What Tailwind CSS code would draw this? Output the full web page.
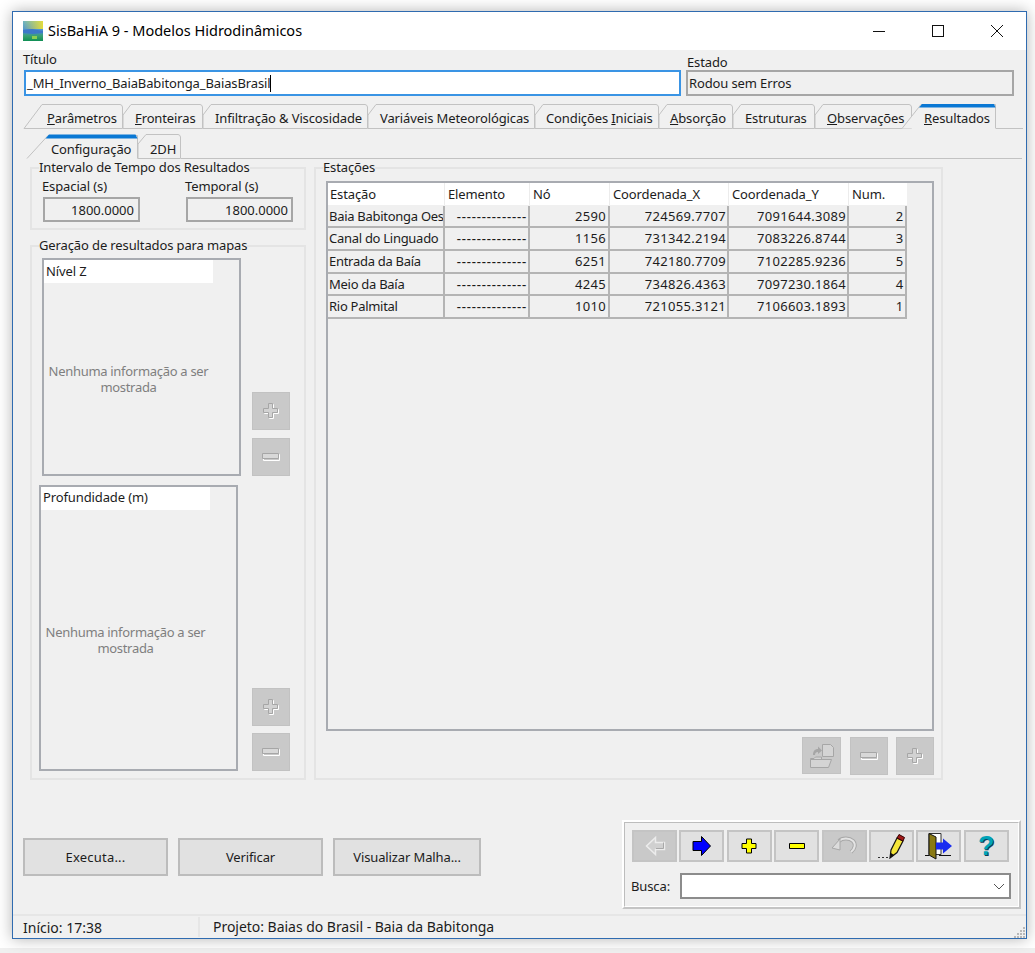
<!DOCTYPE html>
<html lang="pt-BR">
<head>
  <meta charset="UTF-8">
  <title>SisBaHiA 9 - Modelos Hidrodinâmicos</title>
  <script src="https://cdn.jsdelivr.net/npm/@tailwindcss/browser@4"></script>
</head>
<body class="bg-white h-[953px] overflow-hidden font-['Noto_Sans',sans-serif] text-[13px] leading-[16px] tracking-[-0.12px] text-[#1c1c1c]">

  <div class="relative z-10 ml-[12px] mt-[11px] w-[1015px] h-[928px] border border-[#2f6bb0] bg-[#f0f0f0] flex flex-col shadow-[0_0_14px_rgba(0,0,0,0.3)]">

    <!-- title bar -->
    <div class="h-[38px] bg-white flex items-center pl-[10px] shrink-0">
      <svg width="20" height="20" viewBox="0 0 20 20">
        <defs>
          <linearGradient id="logoBg" x1="0" y1="0" x2="0" y2="1">
            <stop offset="0" stop-color="#6fb6c0"/><stop offset="0.5" stop-color="#4a90d0"/><stop offset="0.75" stop-color="#3aa070"/><stop offset="1" stop-color="#0f8f55"/>
          </linearGradient>
          <linearGradient id="logoSun" x1="0" y1="0" x2="1" y2="0">
            <stop offset="0" stop-color="#e4dc3c" stop-opacity="0"/><stop offset="1" stop-color="#e4dc3c"/>
          </linearGradient>
        </defs>
        <rect width="20" height="20" fill="url(#logoBg)"/>
        <rect width="20" height="8" fill="url(#logoSun)"/>
        <path d="M0 9l9-1 11 2v2l-10 1-10-1z" fill="#3d78c8"/>
        <rect x="9" y="15" width="5" height="3" fill="#8ccf50"/>
      </svg>
      <span class="ml-[5px] mb-[2px] text-[14.5px] tracking-normal text-black">SisBaHiA 9 - Modelos Hidrodinâmicos</span>
      <div class="ml-auto flex">
        <div class="w-[58px] h-[38px] flex items-center justify-center"><svg width="12" height="12"><path d="M0 6.5H12" stroke="#111"/></svg></div>
        <div class="w-[59px] h-[38px] flex items-center justify-center"><svg width="12" height="12"><rect x="0.5" y="0.5" width="11" height="11" fill="none" stroke="#111"/></svg></div>
        <div class="w-[59px] h-[38px] flex items-center justify-center"><svg width="12" height="12"><path d="M0 0L12 12M12 0L0 12" stroke="#111"/></svg></div>
      </div>
    </div>

    <!-- titulo / estado -->
    <div class="flex ml-[11px] shrink-0">
      <div class="w-[657px]">
        <div class="h-[20px] pt-[1px] -ml-[1px]">Título</div>
        <div class="h-[26px] bg-white border-2 border-[#3a94e4] pl-[1px] flex items-center">_MH_Inverno_BaiaBabitonga_BaiasBrasil<span class="w-px h-[17px] bg-black"></span></div>
      </div>
      <div class="w-[328px] ml-[5px]">
        <div class="h-[20px] pt-[4px] pl-px">Estado</div>
        <div class="h-[26px] border-2 border-[#a6a6a6] pl-px flex items-center">Rodou sem Erros</div>
      </div>
    </div>

    <!-- main tabs -->
    <div class="flex ml-[11px] mt-[7px] h-[26px] w-[999px] shrink-0">
      <div class="relative w-[99px] pl-[23px] pt-[7px]">
        <svg class="absolute inset-0 overflow-visible" width="99" height="26"><path d="M0 25.5L18 1.5H96Q98 1.5 98.5 4V25.5Z" fill="#f0f0f0" stroke="#c2c2c2"/></svg>
        <span class="relative"><u>P</u>arâmetros</span>
      </div>
      <div class="relative w-[80px] pl-[12px] pt-[7px]">
        <svg class="absolute inset-0 overflow-visible" width="80" height="26"><path d="M0 12L8 1.5H77Q79 1.5 79.5 4V25.5H0Z" fill="#f0f0f0" stroke="#c2c2c2"/></svg>
        <span class="relative"><u>F</u>ronteiras</span>
      </div>
      <div class="relative w-[165px] pl-[12px] pt-[7px]">
        <svg class="absolute inset-0 overflow-visible" width="165" height="26"><path d="M0 12L8 1.5H162Q164 1.5 164.500 4V25.5H0Z" fill="#f0f0f0" stroke="#c2c2c2"/></svg>
        <span class="relative">Infiltração &amp; Viscosidade</span>
      </div>
      <div class="relative w-[167px] pl-[12px] pt-[7px]">
        <svg class="absolute inset-0 overflow-visible" width="167" height="26"><path d="M0 12L8 1.5H164Q166 1.5 166.500 4V25.5H0Z" fill="#f0f0f0" stroke="#c2c2c2"/></svg>
        <span class="relative">Variáveis Meteorológicas</span>
      </div>
      <div class="relative w-[124px] pl-[11px] pt-[7px]">
        <svg class="absolute inset-0 overflow-visible" width="124" height="26"><path d="M0 12L8 1.5H121Q123 1.5 123.500 4V25.5H0Z" fill="#f0f0f0" stroke="#c2c2c2"/></svg>
        <span class="relative">Condições <u>I</u>niciais</span>
      </div>
      <div class="relative w-[74px] pl-[11px] pt-[7px]">
        <svg class="absolute inset-0 overflow-visible" width="74" height="26"><path d="M0 12L8 1.5H71Q73 1.500 73.500 4V25.5H0Z" fill="#f0f0f0" stroke="#c2c2c2"/></svg>
        <span class="relative"><u>A</u>bsorção</span>
      </div>
      <div class="relative w-[82px] pl-[12px] pt-[7px]">
        <svg class="absolute inset-0 overflow-visible" width="82" height="26"><path d="M0 12L8 1.5H79Q81 1.500 81.500 4V25.5H0Z" fill="#f0f0f0" stroke="#c2c2c2"/></svg>
        <span class="relative">Estruturas</span>
      </div>
      <div class="relative w-[97px] pl-[12px] pt-[7px]">
        <svg class="absolute inset-0 overflow-visible" width="97" height="26"><path d="M0 12L8 1.5H94Q96 1.500 96.500 4V25.5H0Z" fill="#f0f0f0" stroke="#c2c2c2"/></svg>
        <span class="relative"><u>O</u>bservações</span>
      </div>
      <div class="relative w-[75px] ml-[9px] pl-[3px] pt-[7px]">
        <svg class="absolute inset-0 overflow-visible" width="75" height="26">
          <path d="M-19 25.500L0 1.500H74.500V25.500" fill="#f0f0f0" stroke="#c2c2c2"/>
          <path d="M-2 4.500L1 1H73L74.500 4.500Z" fill="#0a78d4"/>
        </svg>
        <span class="relative"><u>R</u>esultados</span>
      </div>
      <div class="flex-1 border-b border-[#c2c2c2]"></div>
    </div>

    <!-- sub tabs -->
    <div class="flex ml-[14px] mt-[5px] h-[25px] w-[995px] shrink-0">
      <div class="relative w-[111px] pl-[24px] pt-[7px]">
        <svg class="absolute inset-0 overflow-visible" width="111" height="25">
          <path d="M0 24.500L21 1.500H110.500V24.500" fill="#f0f0f0" stroke="#c2c2c2"/>
          <path d="M18.500 4.500L22 0.500H108.500L110.500 4.500Z" fill="#0a78d4"/>
        </svg>
        <span class="relative">Configuração</span>
      </div>
      <div class="relative w-[43px] pl-[12px] pt-[7px]">
        <svg class="absolute inset-0 overflow-visible" width="43" height="25"><path d="M0 10L8 0.500H40Q42 0.500 42.500 3V24.500H0Z" fill="#f0f0f0" stroke="#c2c2c2"/></svg>
        <span class="relative">2DH</span>
      </div>
      <div class="flex-1 border-b border-[#c2c2c2]"></div>
    </div>

    <!-- groups -->
    <div class="flex ml-[17px] mt-[8px] shrink-0">

      <div class="w-[276px] flex flex-col gap-[15px]">
        <div class="h-[63px] border-2 border-[#e4e4e4]">
          <div class="-mt-[10px] ml-[7px] w-fit h-[17px] bg-[#f0f0f0]">Intervalo de Tempo dos Resultados</div>
          <div class="flex ml-[10px] mt-px">
            <div class="w-[143px]">
              <div class="h-[20px] pt-[1px]">Espacial (s)</div>
              <div class="ml-px w-[97px] h-[25px] border-2 border-[#a6a6a6] flex items-center justify-end pr-[4px] tracking-normal">1800.0000</div>
            </div>
            <div>
              <div class="h-[20px] pt-[1px]">Temporal (s)</div>
              <div class="ml-px w-[107px] h-[25px] border-2 border-[#a6a6a6] flex items-center justify-end pr-[3px] tracking-normal">1800.0000</div>
            </div>
          </div>
        </div>

        <div class="h-[535px] border-2 border-[#e4e4e4]">
          <div class="-mt-[10px] ml-[7px] w-fit h-[17px] bg-[#f0f0f0]">Geração de resultados para mapas</div>
          <div class="flex items-end ml-[10px] mt-[4px]">
            <div class="w-[199px] h-[218px] border-2 border-[#a8abb1] flex flex-col">
              <div class="w-[169px] h-[23px] bg-white pl-[2px] pt-[3px] shrink-0">Nível Z</div>
              <div class="w-[169px] flex-1 flex items-center justify-center text-center text-[#7f7f7f] tracking-[-0.3px]">Nenhuma informação a ser<br>mostrada</div>
            </div>
            <div class="ml-[11px] flex flex-col gap-[8px]">
              <div class="w-[38px] h-[38px] bg-[#c9c9c9] border border-[#c2c2c2] flex items-center justify-center">
                <svg width="18" height="18"><path d="M7.500 2.500H11.500V7.500H16.500V11.500H11.500V16.500H7.500V11.500H2.500V7.500H7.500Z" fill="none" stroke="#fff"/><path d="M6.500 1.500H10.500V6.500H15.500V10.500H10.500V15.500H6.500V10.500H1.500V6.500H6.500Z" fill="#d2d2d2" stroke="#a6a6a6"/></svg>
              </div>
              <div class="w-[38px] h-[38px] bg-[#c9c9c9] border border-[#c2c2c2] flex items-center justify-center">
                <svg width="18" height="8"><path d="M1.500 1.500H17.500V7.500H1.500Z" fill="none" stroke="#fff"/><path d="M0.500 0.500H16.500V5.500H0.500Z" fill="#d8d8d8" stroke="#a6a6a6"/></svg>
              </div>
            </div>
          </div>
          <div class="flex items-end ml-[7px] mt-[9px]">
            <div class="w-[199px] h-[286px] border-2 border-[#a8abb1] flex flex-col">
              <div class="w-[169px] h-[23px] bg-white pl-[2px] pt-[2px] shrink-0">Profundidade (m)</div>
              <div class="w-[169px] flex-1 flex items-center justify-center text-center text-[#7f7f7f] tracking-[-0.3px]">Nenhuma informação a ser<br>mostrada</div>
            </div>
            <div class="ml-[14px] flex flex-col gap-[7px]">
              <div class="w-[38px] h-[38px] bg-[#c9c9c9] border border-[#c2c2c2] flex items-center justify-center">
                <svg width="18" height="18"><path d="M7.500 2.500H11.500V7.500H16.500V11.500H11.500V16.500H7.500V11.500H2.500V7.500H7.500Z" fill="none" stroke="#fff"/><path d="M6.500 1.500H10.500V6.500H15.500V10.500H10.500V15.500H6.500V10.500H1.500V6.500H6.500Z" fill="#d2d2d2" stroke="#a6a6a6"/></svg>
              </div>
              <div class="w-[38px] h-[38px] bg-[#c9c9c9] border border-[#c2c2c2] flex items-center justify-center">
                <svg width="18" height="8"><path d="M1.500 1.500H17.500V7.500H1.500Z" fill="none" stroke="#fff"/><path d="M0.500 0.500H16.500V5.500H0.500Z" fill="#d8d8d8" stroke="#a6a6a6"/></svg>
              </div>
            </div>
          </div>
        </div>
      </div>

      <div class="ml-[8px] w-[629px] h-[613px] border-2 border-[#e4e4e4]">
        <div class="-mt-[10px] ml-[7px] w-fit h-[17px] bg-[#f0f0f0]">Estações</div>
        <div class="ml-[10px] mt-[5px] w-[608px] h-[550px] border-2 border-[#a8abb1]">
          <div class="grid grid-cols-[117px_85px_80px_119px_120px_58px] auto-rows-[22.67px]">
            <div class="bg-white h-[22px] pl-[2px] pt-[3px] border-r border-[#ececec]">Estação</div>
            <div class="bg-white h-[22px] pl-[3px] pt-[3px] border-r border-[#ececec]">Elemento</div>
            <div class="bg-white h-[22px] pl-[3px] pt-[3px] border-r border-[#ececec]">Nó</div>
            <div class="bg-white h-[22px] pl-[3px] pt-[3px] border-r border-[#ececec]">Coordenada_X</div>
            <div class="bg-white h-[22px] pl-[3px] pt-[3px] border-r border-[#ececec]">Coordenada_Y</div>
            <div class="bg-white h-[22px] pl-[3px] pt-[3px]">Num.</div>

            <div class="border-r-2 border-b-2 border-[#b4b4b4] pl-px pt-[2px] tracking-[-0.28px] overflow-hidden whitespace-nowrap">Baia Babitonga Oeste</div>
            <div class="border-r-2 border-b-2 border-[#b4b4b4] text-right pr-[1px] pt-[2px] tracking-[0.85px] font-medium overflow-hidden">--------------</div>
            <div class="border-r-2 border-b-2 border-[#b4b4b4] text-right pr-[2px] pt-[2px] tracking-[0.3px]">2590</div>
            <div class="border-r-2 border-b-2 border-[#b4b4b4] text-right pr-[1px] pt-[2px] tracking-[0.3px]">724569.7707</div>
            <div class="border-r-2 border-b-2 border-[#b4b4b4] text-right pr-[1px] pt-[2px] tracking-[0.3px]">7091644.3089</div>
            <div class="border-r-2 border-b-2 border-[#b4b4b4] text-right pr-[2px] pt-[2px]">2</div>

            <div class="border-r-2 border-b-2 border-[#b4b4b4] pl-px pt-[2px] tracking-[-0.28px] overflow-hidden whitespace-nowrap">Canal do Linguado</div>
            <div class="border-r-2 border-b-2 border-[#b4b4b4] text-right pr-[1px] pt-[2px] tracking-[0.85px] font-medium overflow-hidden">--------------</div>
            <div class="border-r-2 border-b-2 border-[#b4b4b4] text-right pr-[2px] pt-[2px] tracking-[0.3px]">1156</div>
            <div class="border-r-2 border-b-2 border-[#b4b4b4] text-right pr-[1px] pt-[2px] tracking-[0.3px]">731342.2194</div>
            <div class="border-r-2 border-b-2 border-[#b4b4b4] text-right pr-[1px] pt-[2px] tracking-[0.3px]">7083226.8744</div>
            <div class="border-r-2 border-b-2 border-[#b4b4b4] text-right pr-[2px] pt-[2px]">3</div>

            <div class="border-r-2 border-b-2 border-[#b4b4b4] pl-px pt-[2px] tracking-[-0.28px] overflow-hidden whitespace-nowrap">Entrada da Baía</div>
            <div class="border-r-2 border-b-2 border-[#b4b4b4] text-right pr-[1px] pt-[2px] tracking-[0.85px] font-medium overflow-hidden">--------------</div>
            <div class="border-r-2 border-b-2 border-[#b4b4b4] text-right pr-[2px] pt-[2px] tracking-[0.3px]">6251</div>
            <div class="border-r-2 border-b-2 border-[#b4b4b4] text-right pr-[1px] pt-[2px] tracking-[0.3px]">742180.7709</div>
            <div class="border-r-2 border-b-2 border-[#b4b4b4] text-right pr-[1px] pt-[2px] tracking-[0.3px]">7102285.9236</div>
            <div class="border-r-2 border-b-2 border-[#b4b4b4] text-right pr-[2px] pt-[2px]">5</div>

            <div class="border-r-2 border-b-2 border-[#b4b4b4] pl-px pt-[2px] tracking-[-0.28px] overflow-hidden whitespace-nowrap">Meio da Baía</div>
            <div class="border-r-2 border-b-2 border-[#b4b4b4] text-right pr-[1px] pt-[2px] tracking-[0.85px] font-medium overflow-hidden">--------------</div>
            <div class="border-r-2 border-b-2 border-[#b4b4b4] text-right pr-[2px] pt-[2px] tracking-[0.3px]">4245</div>
            <div class="border-r-2 border-b-2 border-[#b4b4b4] text-right pr-[1px] pt-[2px] tracking-[0.3px]">734826.4363</div>
            <div class="border-r-2 border-b-2 border-[#b4b4b4] text-right pr-[1px] pt-[2px] tracking-[0.3px]">7097230.1864</div>
            <div class="border-r-2 border-b-2 border-[#b4b4b4] text-right pr-[2px] pt-[2px]">4</div>

            <div class="border-r-2 border-b-2 border-[#b4b4b4] pl-px pt-[2px] tracking-[-0.28px] overflow-hidden whitespace-nowrap">Rio Palmital</div>
            <div class="border-r-2 border-b-2 border-[#b4b4b4] text-right pr-[1px] pt-[2px] tracking-[0.85px] font-medium overflow-hidden">--------------</div>
            <div class="border-r-2 border-b-2 border-[#b4b4b4] text-right pr-[2px] pt-[2px] tracking-[0.3px]">1010</div>
            <div class="border-r-2 border-b-2 border-[#b4b4b4] text-right pr-[1px] pt-[2px] tracking-[0.3px]">721055.3121</div>
            <div class="border-r-2 border-b-2 border-[#b4b4b4] text-right pr-[1px] pt-[2px] tracking-[0.3px]">7106603.1893</div>
            <div class="border-r-2 border-b-2 border-[#b4b4b4] text-right pr-[2px] pt-[2px]">1</div>
          </div>
        </div>
        <div class="ml-[10px] mt-[6px] w-[608px] flex justify-end items-start">
          <div class="w-[39px] h-[37px] bg-[#c9c9c9] border border-[#c2c2c2] flex items-center justify-center">
            <svg width="28" height="26" viewBox="0 0 28 26" fill="none">
              <path d="M14.500 1.500H22.500L25.500 4.500V13.500H14.500Z" fill="#d4d4d4" stroke="#a6a6a6"/>
              <path d="M5 12C5 8 7 6 10 6V3.500L14 7.500L10 11V9C8 9 7 10 7 12Z" fill="#a6a6a6"/>
              <path d="M2.500 15.500H6L7.500 14H13.500V16.500H2.500Z" fill="#d4d4d4" stroke="#a6a6a6"/>
              <path d="M2.500 24.500V16.500H23.500L20.500 24.500Z" fill="#d4d4d4" stroke="#a6a6a6"/>
            </svg>
          </div>
          <div class="ml-[9px] w-[38px] h-[38px] bg-[#c9c9c9] border border-[#c2c2c2] flex items-center justify-center">
            <svg width="18" height="8"><path d="M1.500 1.500H17.500V7.500H1.500Z" fill="none" stroke="#fff"/><path d="M0.500 0.500H16.500V5.500H0.500Z" fill="#d8d8d8" stroke="#a6a6a6"/></svg>
          </div>
          <div class="ml-[8px] w-[38px] h-[38px] bg-[#c9c9c9] border border-[#c2c2c2] flex items-center justify-center">
            <svg width="18" height="18"><path d="M7.500 2.500H11.500V7.500H16.500V11.500H11.500V16.500H7.500V11.500H2.500V7.500H7.500Z" fill="none" stroke="#fff"/><path d="M6.500 1.500H10.500V6.500H15.500V10.500H10.500V15.500H6.500V10.500H1.500V6.500H6.500Z" fill="#d2d2d2" stroke="#a6a6a6"/></svg>
          </div>
        </div>
      </div>
    </div>

    <!-- bottom buttons and navigation panel -->
    <div class="flex-1 flex">
      <div class="flex gap-[10px] ml-[10px] mt-[58px] items-start">
        <div class="w-[145px] h-[38px] bg-[#e1e1e1] border-2 border-[#bcbcbc] flex items-center justify-center tracking-[0.2px]">Executa...</div>
        <div class="w-[145px] h-[38px] bg-[#e1e1e1] border-2 border-[#bcbcbc] flex items-center justify-center">Verificar</div>
        <div class="w-[148px] h-[38px] bg-[#e1e1e1] border-2 border-[#bcbcbc] flex items-center justify-center">Visualizar Malha...</div>
      </div>

      <div class="ml-auto mr-[5px] mt-[40px] w-[399px] h-[89px] border-2 border-t-white border-l-white border-r-[#c4c4c4] border-b-[#c4c4c4]">
        <div class="h-full border border-t-[#bdbdbd] border-l-[#bdbdbd] border-r-white border-b-white pl-[7px] pt-[7px]">
          <div class="flex gap-[2.4px]">
            <div class="w-[45px] h-[32px] bg-[#c9c9c9] border-2 border-[#c4c4c4] flex items-center justify-center">
              <svg width="22" height="22"><path d="M20.500 7.500H11.500V2.500L2.500 11L11.500 19.500V14.500H20.500Z" fill="#d0d0d0" stroke="#ececec" stroke-width="1.500"/><path d="M19.500 7.500V13.500H12" fill="none" stroke="#a8a8a8"/></svg>
            </div>
            <div class="w-[45px] h-[32px] bg-[#e1e1e1] border-2 border-[#c4c4c4] flex items-center justify-center">
              <svg width="20" height="22"><path d="M1 6.500H9.500V1.500L18.500 11L9.500 20.500V15.500H1Z" fill="#0000ff" stroke="#000"/></svg>
            </div>
            <div class="w-[45px] h-[32px] bg-[#e1e1e1] border-2 border-[#c4c4c4] flex items-center justify-center">
              <svg width="16" height="16"><path d="M5.500 1H10.500V5.500H15V10.500H10.500V15H5.500V10.500H1V5.500H5.500Z" fill="#ffff00" stroke="#000"/></svg>
            </div>
            <div class="w-[45px] h-[32px] bg-[#e1e1e1] border-2 border-[#c4c4c4] flex items-center justify-center">
              <svg width="18" height="8"><path d="M1.500 1.500H16.500V6.500H1.500Z" fill="#ffff00" stroke="#000"/></svg>
            </div>
            <div class="w-[45px] h-[32px] bg-[#c9c9c9] border-2 border-[#c4c4c4] flex items-center justify-center">
              <svg width="26" height="20" fill="none">
                <path d="M8 5C11 2 18 1.500 22 5C25 8 24 13 20 16" stroke="#a8a8a8" stroke-width="4"/>
                <path d="M8 5C11 2 18 1.500 22 5C25 8 24 13 20 16" stroke="#e4e4e4" stroke-width="2"/>
                <path d="M1 12L9 3V14Z" fill="#dcdcdc" stroke="#a8a8a8"/>
              </svg>
            </div>
            <div class="w-[45px] h-[32px] bg-[#e1e1e1] border-2 border-[#c4c4c4] flex items-center justify-center">
              <svg width="30" height="26">
                <path d="M2 24.500H4M6 24.500H8M10 24.500H12" stroke="#333"/>
                <path d="M14 25L15 17L21 5L27 8L21 19.500Z" fill="#f5e63a" stroke="#111" stroke-width="1.200"/>
                <path d="M21 5L23 1.500L28.500 4.500L27 8Z" fill="#a01818" stroke="#300"/>
                <path d="M14 25L15 20L18 22Z" fill="#111"/>
              </svg>
            </div>
            <div class="w-[45px] h-[32px] bg-[#e1e1e1] border-2 border-[#c4c4c4] flex items-center justify-center">
              <svg width="30" height="28">
                <path d="M5 1.500H17V22.500H5Z" fill="#fff" stroke="#333"/>
                <path d="M5 1.500L12 5V27L5 23Z" fill="#8a7a14" stroke="#111"/>
                <path d="M1 23.500H5M15 23.500H27" stroke="#111"/>
                <path d="M12 10.500H19V6.500L28 14L19 21.500V17.500H12Z" fill="#1a2cf0"/>
              </svg>
            </div>
            <div class="w-[45px] h-[32px] bg-[#e1e1e1] border-2 border-[#c4c4c4] flex items-center justify-center">
              <span class="font-['Liberation_Sans',sans-serif] font-bold text-[27px] leading-[28px] text-[#00a3b8] [text-shadow:1px_1px_0_#123a55]">?</span>
            </div>
          </div>
          <div class="flex items-center mt-[11px] -ml-px">
            <span class="w-[49px]">Busca:</span>
            <div class="w-[331px] h-[26px] bg-white border-2 border-[#8c8c8c] flex items-center justify-end pr-[4px]">
              <svg width="12" height="7" fill="none"><path d="M1 1L6 6L11 1" stroke="#555"/></svg>
            </div>
          </div>
        </div>
      </div>
    </div>

    <!-- status bar -->
    <div class="h-[24px] border-t-2 border-[#e6e6e6] flex shrink-0 relative text-[14px] tracking-normal">
      <div class="w-[187px] pl-[10px] pt-[3px] border-r-2 border-[#e6e6e6] my-[1px]">Início: 17:38</div>
      <div class="pl-[13px] pt-[3px] tracking-[-0.03px]">Projeto: Baias do Brasil - Baia da Babitonga</div>
      <svg class="absolute right-0 bottom-0" width="12" height="12" fill="#b8b8b8">
        <rect x="9" y="1" width="2" height="2"/><rect x="6" y="4" width="2" height="2"/><rect x="9" y="4" width="2" height="2"/><rect x="3" y="7" width="2" height="2"/><rect x="6" y="7" width="2" height="2"/><rect x="9" y="7" width="2" height="2"/><rect x="0" y="10" width="2" height="2"/><rect x="3" y="10" width="2" height="2"/><rect x="6" y="10" width="2" height="2"/><rect x="9" y="10" width="2" height="2"/>
      </svg>
    </div>
  </div>

  <div class="mt-[9px] h-[5px] bg-[#f0f0f0]"></div>
</body>
</html>
